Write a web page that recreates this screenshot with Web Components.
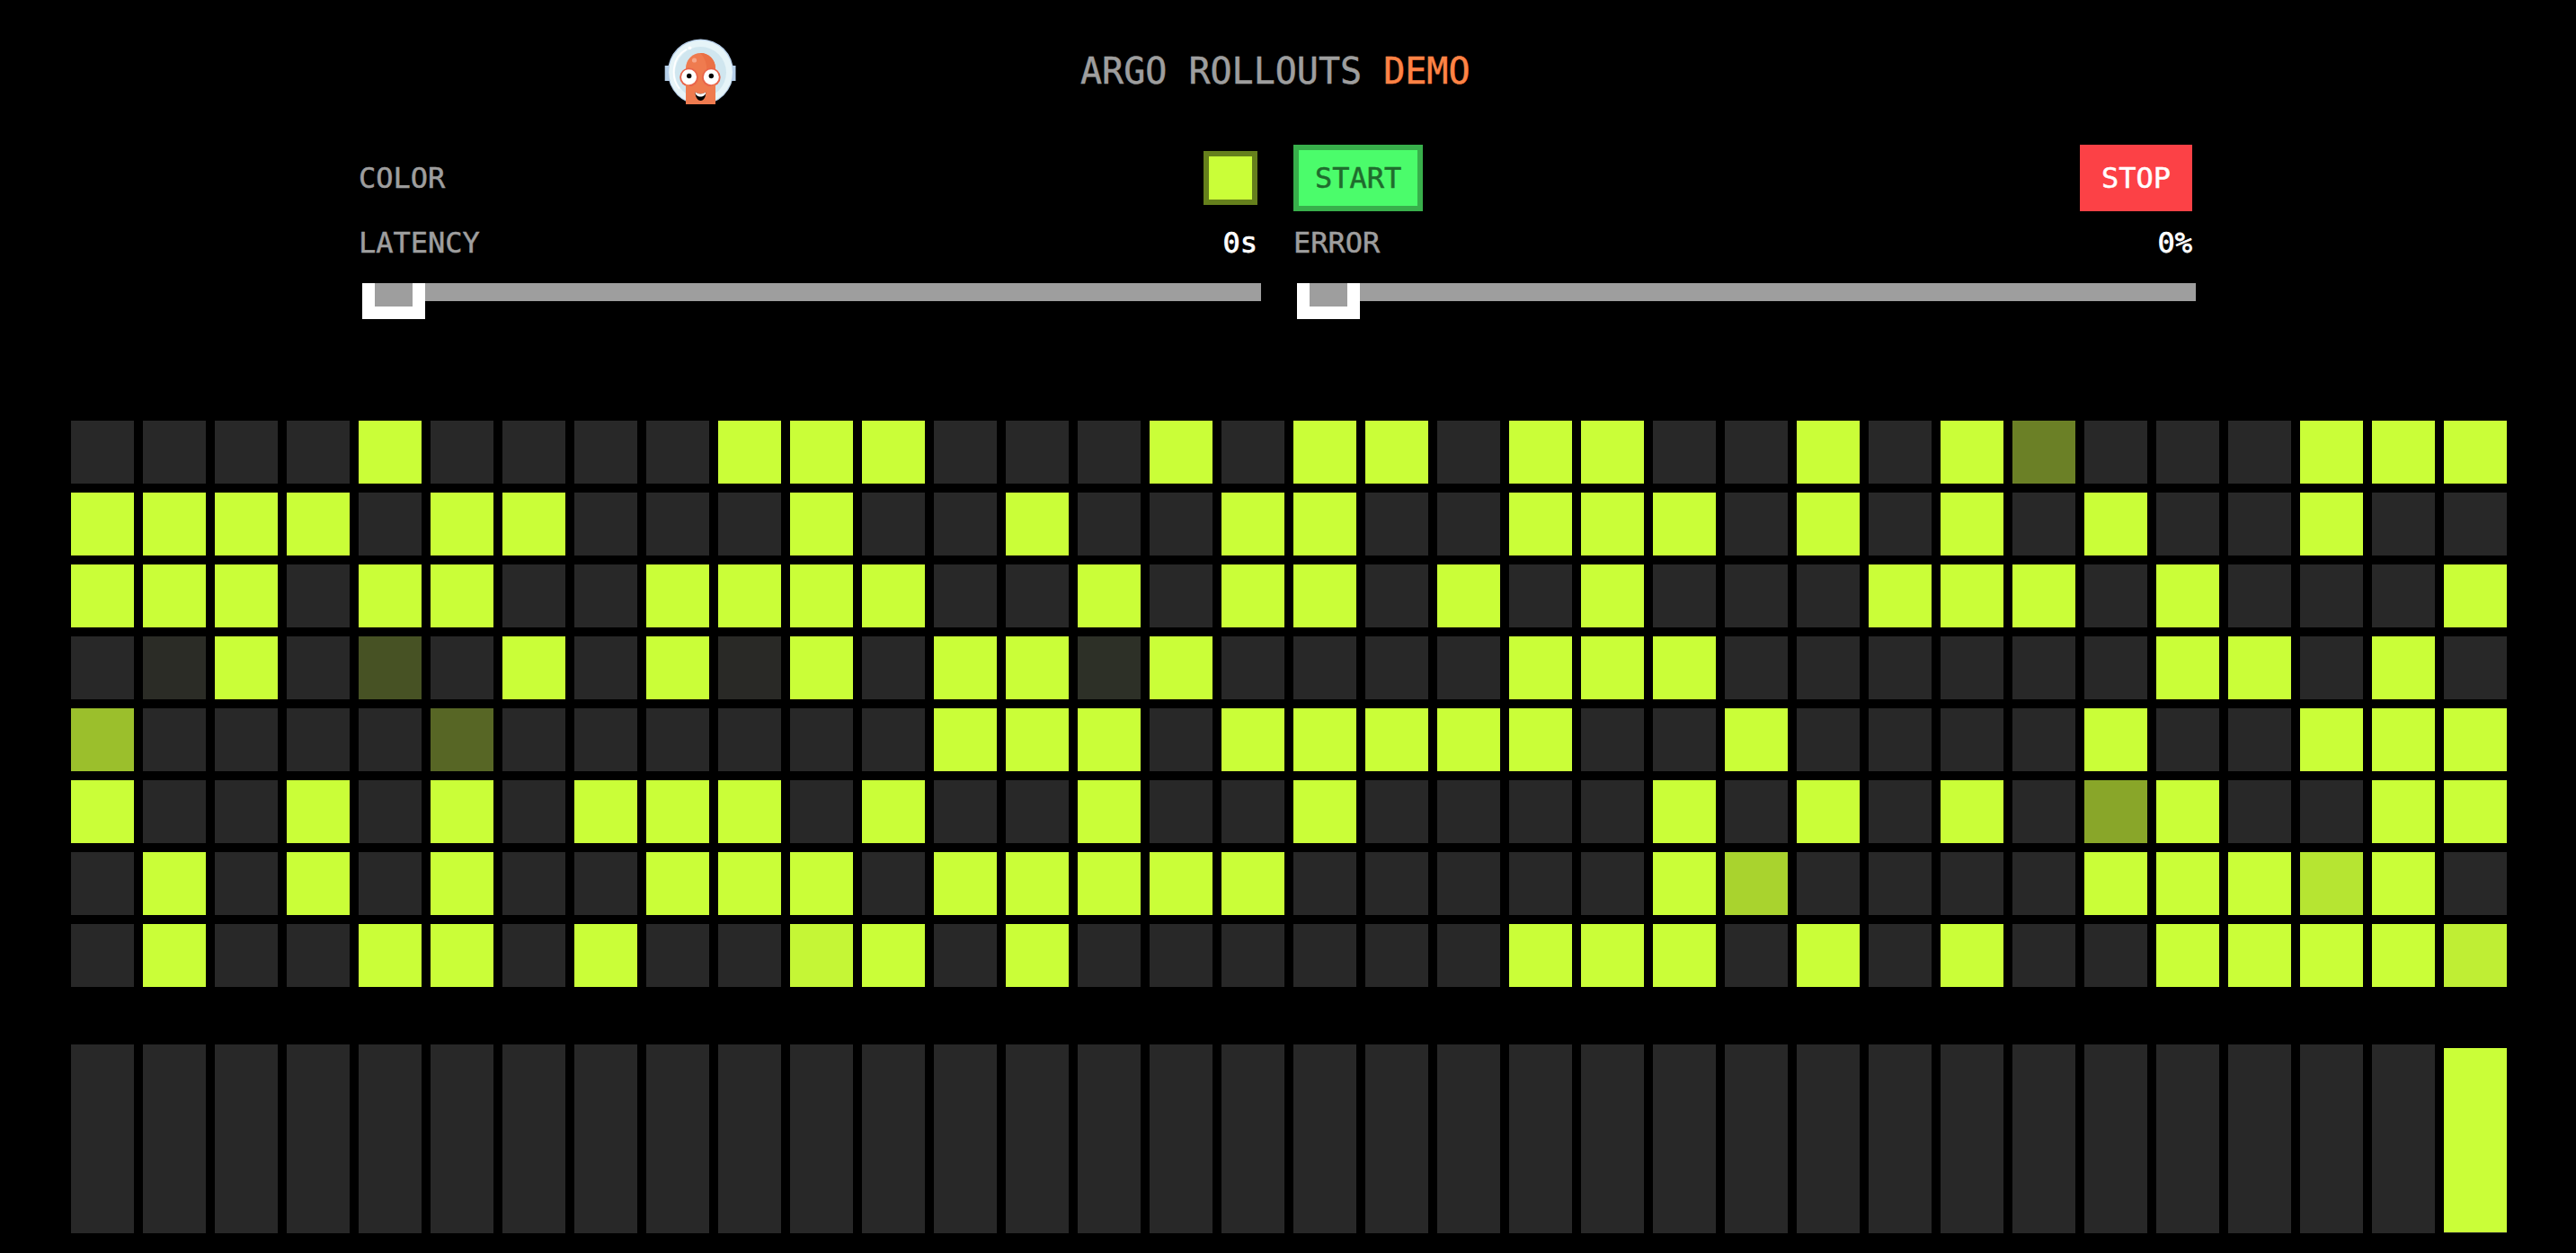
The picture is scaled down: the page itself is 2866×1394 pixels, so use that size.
<!DOCTYPE html>
<html lang="en">
<head>
<meta charset="utf-8">
<title>Argo Rollouts Demo</title>
<style>
html,body{margin:0;background:#000;height:1394px;overflow:hidden}
</style>
</head>
<body>
<rollouts-app></rollouts-app>
<script>
const define = (name, html, setup) => customElements.define(name, class extends HTMLElement {
  connectedCallback() {
    if (this.shadowRoot) return;
    const root = this.attachShadow({ mode: 'open' });
    const t = document.createElement('template');
    t.innerHTML = html;
    root.append(t.content.cloneNode(true));
    if (setup) setup(this, root);
  }
});

define('argo-logo', `<style>:host{display:block;width:80px;height:76px}svg{display:block}</style>
<svg width="80" height="76" viewBox="0 0 80 76">
  <rect x=".7" y="31" width="8" height="17" fill="#b5cfe9"/>
  <rect x="71" y="31" width="8.500" height="17" fill="#b5cfe9"/>
  <clipPath id="c"><rect width="80" height="73"/></clipPath>
  <g transform="translate(1 1)"><g clip-path="url(#c)">
  <circle cx="39.5" cy="37" r="36.6" fill="#b8d0ea"/>
  <circle cx="39.5" cy="37.2" r="35.4" fill="#e6f4f8"/>
  <circle cx="39.5" cy="37.6" r="28.5" fill="#d0e6ef"/>
  <path d="M23 73V33a16.500 17 0 0 1 33 0V73z" fill="#ef7b4f"/>
  <path d="M39 16c7 7 10 18 5 34h12V33A16.500 17 0 0 0 39 16z" fill="#ea7045"/>
  <circle cx="26.600" cy="43" r="10.400" fill="#e9654b"/>
  <circle cx="51.3" cy="43" r="10.400" fill="#e9654b"/>
  <path d="M28 53h23l5-3v23H23V50z" fill="#ef7b4f"/>
  <circle cx="26.500" cy="42.7" r="8.5" fill="#fff"/>
  <circle cx="51.3" cy="42.7" r="8.5" fill="#fff"/>
  <circle cx="26.7" cy="41.5" r="2.7" fill="#000"/>
  <circle cx="51.3" cy="41.5" r="2.7" fill="#000"/>
  <circle cx="32.5" cy="24" r="2.6" fill="#f7a78a"/>
  <path d="M33.5 59.5q6 4 11.7 0c.3 5-2 9.400-5.700 9.400s-6-4.400-6-9.400z" fill="#000"/>
  <path d="M33.500 59.500q6 4 11.700 0c.1 3.500-2.700 5-5.800 5s-5.900-2-5.900-5z" fill="#fff"/>
  <path d="M23.200 12.300C7 21 6.500 44 15.500 55" fill="none" stroke="#fff" stroke-width="1.800" stroke-linecap="round"/>
  <circle cx="27.500" cy="10.300" r="1.900" fill="#fff"/>
  </g></g>
</svg>`);

define('color-swatch', `<style>:host{display:block;box-sizing:border-box;width:60px;height:60px;border:6px solid #65801c;background:#cafe38}</style>`);

define('action-button', `<style>:host{display:block}
button{display:block;box-sizing:border-box;height:74px;margin:0;padding:0 18px;border:6px solid var(--edge);background:var(--fill);color:var(--ink);font:inherit;line-height:62px;border-radius:0}</style>
<button><slot></slot></button>`);

define('range-slider', `<style>
:host{display:block}
.head{display:flex;justify-content:space-between;line-height:38px;color:#9e9e9e}
b{font-weight:400;color:#fff;-webkit-text-stroke:.75px #fff}
.track{display:flex;width:1000px;height:20px;margin:26px 0 0 4px;background:#9e9e9e}
.thumb{box-sizing:border-box;width:70px;height:40px;border:14px solid #fff;border-top:0;background:#9e9e9e}
</style>
<div class="head"><slot></slot><b></b></div>
<div class="track"><div class="thumb"></div></div>`, (el, root) => { root.querySelector('b').textContent = el.getAttribute('value'); });

define('request-grid', `<style>:host{display:grid;grid-template-columns:repeat(34,70px);grid-auto-rows:70px;gap:10px}
i{background:#282828}i.on{background:#cafe38}</style>`, (el, root) => {
  const rows = [
    [4,9,10,11,15,17,18,20,21,24,26,31,32,33],
    [0,1,2,3,5,6,10,13,16,17,20,21,22,24,26,28,31],
    [0,1,2,4,5,8,9,10,11,14,16,17,19,21,25,26,27,29,33],
    [2,6,8,10,12,13,15,20,21,22,29,30,32],
    [12,13,14,16,17,18,19,20,23,28,31,32,33],
    [0,3,5,7,8,9,11,14,17,22,24,26,29,32,33],
    [1,3,5,8,9,10,12,13,14,15,16,22,28,29,30,32],
    [1,4,5,7,11,13,20,21,22,24,26,29,30,31,32]
  ];
  const fading = {
    '0,27':'#6b8026','3,1':'#2b2c26','3,4':'#475224','3,9':'#292926','3,14':'#2d3027',
    '4,0':'#9bbf2c','4,5':'#576625','5,28':'#89a629','6,23':'#a9d32e','6,31':'#b6e532',
    '7,10':'#c5f636','7,33':'#bfee34'
  };
  rows.forEach((row, r) => {
    for (let c = 0; c < 34; c++) {
      const cell = document.createElement('i');
      if (row.includes(c)) cell.className = 'on';
      const shade = fading[r + ',' + c];
      if (shade) cell.style.background = shade;
      root.append(cell);
    }
  });
});

define('history-chart', `<style>:host{display:flex;gap:10px;height:210px}
i{flex:none;box-sizing:border-box;width:70px;background:#282828}
i:last-child{background:#cafe38;border-top:4px solid #000;border-bottom:1px solid #282828}</style>`, (el, root) => {
  for (let c = 0; c < 34; c++) root.append(document.createElement('i'));
});

define('rollouts-app', `<style>
:host{display:flex;flex-direction:column;box-sizing:border-box;height:1394px;padding:42px 77px 0 79px;background:#000;color:#9e9e9e;font:32px/38px "DejaVu Sans Mono",monospace;-webkit-text-stroke:.5px currentColor}
header{display:flex;flex:none;padding-left:660px;height:76px}
h1{margin:13px 0 0 383px;font-size:40px;line-height:48px;font-weight:400;white-space:nowrap}
h1 span{color:#ff8345;-webkit-text-stroke-color:#ff8345}
.controls{display:grid;flex:none;grid-template-columns:1000px 1000px;column-gap:40px;padding:43px 0 0 320px;height:350px;box-sizing:border-box;align-content:start}
.row{display:flex;justify-content:space-between;align-items:center;height:74px}
range-slider{margin-top:16px}
action-button{-webkit-text-stroke-color:var(--ink)}
.go{--fill:#4bfc6b;--edge:#38af4b;--ink:#1f6c2d}
.halt{--fill:#fc4146;--edge:#fc4146;--ink:#fff}
history-chart{flex:none;margin-top:64px}
</style>
<header><argo-logo></argo-logo><h1>ARGO ROLLOUTS <span>DEMO</span></h1></header>
<section class="controls">
<div class="row"><span>COLOR</span><color-swatch></color-swatch></div>
<div class="row"><action-button class="go">START</action-button><action-button class="halt">STOP</action-button></div>
<range-slider value="0s">LATENCY</range-slider>
<range-slider value="0%">ERROR</range-slider>
</section>
<request-grid></request-grid>
<history-chart></history-chart>`);
</script>
</body>
</html>
